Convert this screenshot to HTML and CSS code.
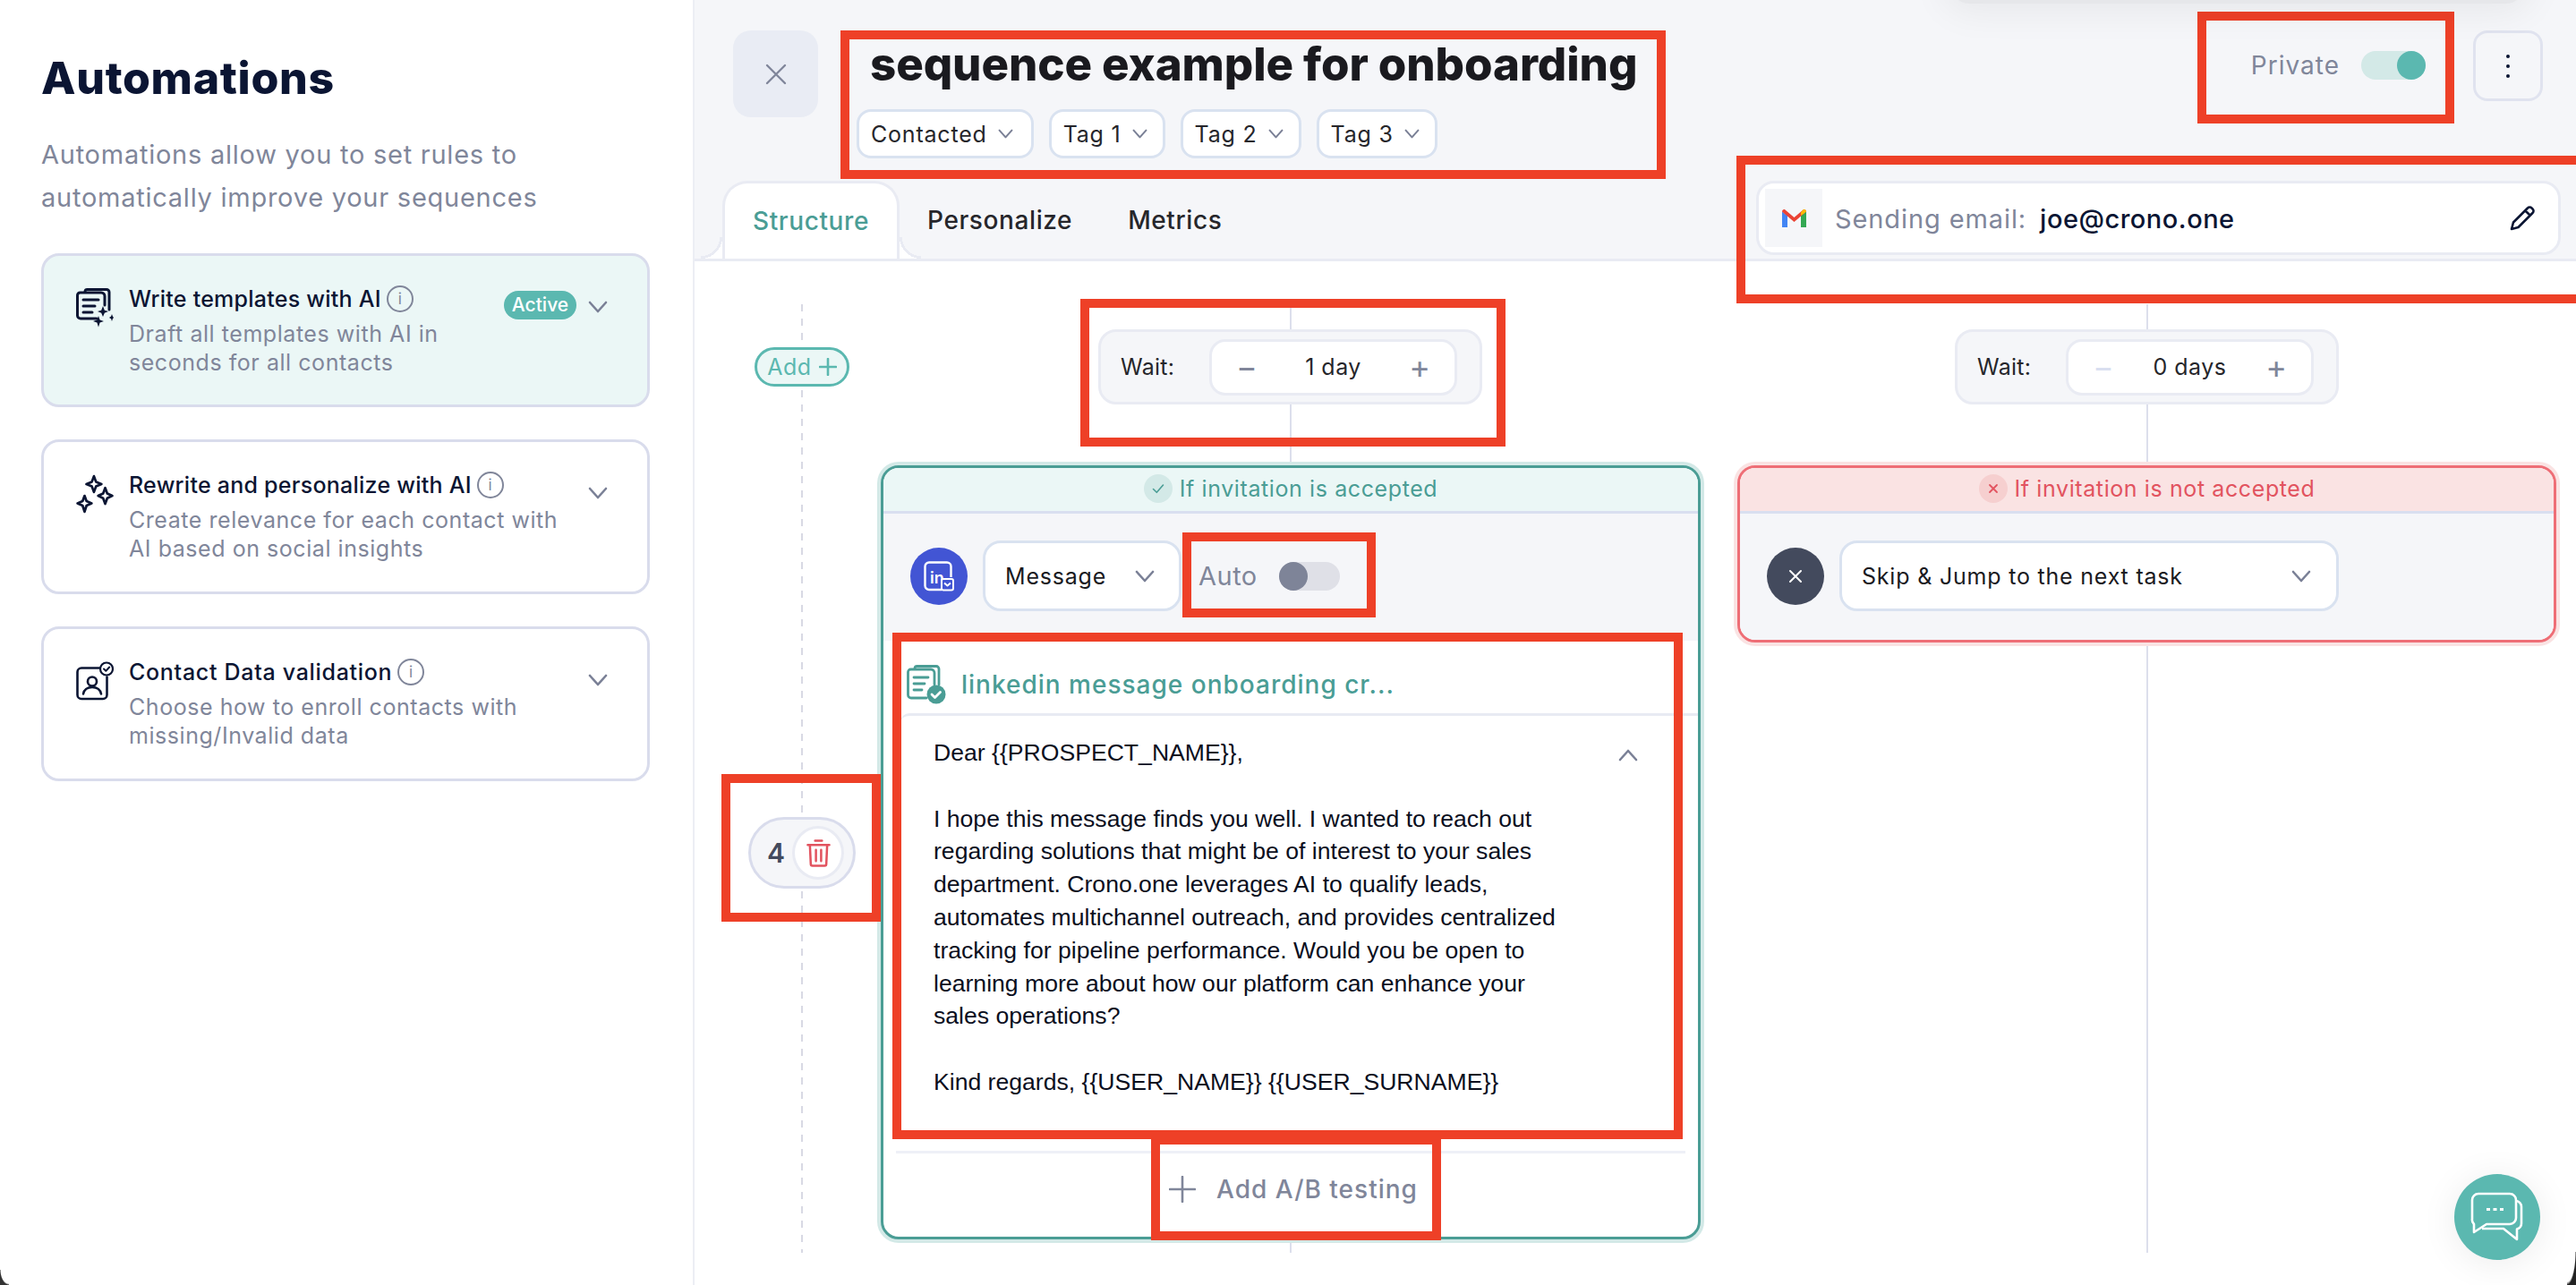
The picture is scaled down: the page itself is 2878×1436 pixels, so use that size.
FILE: index.html
```html
<!DOCTYPE html>
<html lang="en">
<head>
    <meta charset="UTF-8">
    <meta name="viewport" content="width=device-width, initial-scale=1.0">
    <title>Sequence editor</title>
    <link rel="stylesheet" href="styles.css">
</head>
<body>
<div class="app">
    <aside class="sidebar">
        <h1 class="side-title">Automations</h1>
        <p class="side-intro">Automations allow you to set rules to<br>automatically improve your sequences</p>

        <div class="auto-card active">
            <svg class="auto-icon" viewBox="0 0 42 44" fill="none" stroke="#0b1533" stroke-width="3" stroke-linecap="round" stroke-linejoin="round">
                <path d="M10 4V3.500A2.500 2.500 0 0 1 12.500 1.500H34a3 3 0 0 1 3 3V24"/>
                <path d="M23 34H5a3.500 3.500 0 0 1-3.500-3.500V8A3 3 0 0 1 4.500 5H28a4 4 0 0 1 4 4V19"/>
                <path d="M8 13H25M8 20H21M8 27H18"/>
                <path fill="#0b1533" stroke="none" d="M30 20l1.800 4.700L36 26l-4.200 1.800L30 32l-1.800-4.200L24 26l4.200-1.300zM40 29l.9 2.600L42 33l-1.100 1.300L40 37l-.9-2.700L37 33l2.100-1.400zM25 31l1.600 4.400L31 37l-4.400 1.600L25 43.500l-1.600-4.900L19 37l4.400-1.600z"/>
            </svg>
            <div class="auto-text">
                <div class="auto-name">Write templates with AI <span class="info">i</span></div>
                <div class="auto-desc">Draft all templates with AI in<br>seconds for all contacts</div>
            </div>
            <span class="badge">Active</span>
            <svg class="chev side-chev" viewBox="0 0 22 14"><path d="M2 2l9 10 9-10"/></svg>
        </div>

        <div class="auto-card">
            <svg class="auto-icon" viewBox="0 0 40 42" fill="none" stroke="#0b1533" stroke-width="2.600" stroke-linejoin="round">
                <path d="M19 2l2.200 6 5.800 2.500-5.800 2.500L19 19l-2.200-6-5.800-2.500 5.800-2.500zM31 14.500l2.200 6 5.300 2.500-5.300 2.500-2.200 6-2.200-6-5.300-2.500 5.300-2.500zM9 23l2.100 5.600 5.400 2.400-5.400 2.400L9 40l-2.100-6.600L1.500 31l5.400-2.400z"/>
            </svg>
            <div class="auto-text">
                <div class="auto-name">Rewrite and personalize with AI <span class="info">i</span></div>
                <div class="auto-desc">Create relevance for each contact with<br>AI based on social insights</div>
            </div>
            <svg class="chev side-chev" viewBox="0 0 22 14"><path d="M2 2l9 10 9-10"/></svg>
        </div>

        <div class="auto-card">
            <svg class="auto-icon" viewBox="0 0 42 43" fill="none" stroke="#0b1533" stroke-width="2.600" stroke-linecap="round" stroke-linejoin="round">
                <path d="M28 7H6a4.500 4.500 0 0 0-4.500 4.500V37A4.500 4.500 0 0 0 6 41.500H30a4.500 4.500 0 0 0 4.500-4.500V17"/>
                <circle cx="18" cy="22" r="5"/>
                <path d="M8 36c1-5 5-7.500 10-7.500s9 2.500 10 7.500"/>
                <circle cx="34" cy="8" r="7" fill="#fff" stroke-width="2.200"/>
                <path stroke-width="2" d="M31 8l2.300 2.300L37.200 6"/>
            </svg>
            <div class="auto-text">
                <div class="auto-name loose">Contact Data validation <span class="info">i</span></div>
                <div class="auto-desc">Choose how to enroll contacts with<br>missing/Invalid data</div>
            </div>
            <svg class="chev side-chev" viewBox="0 0 22 14"><path d="M2 2l9 10 9-10"/></svg>
        </div>
    </aside>

    <main class="main">
        <header class="head">
            <div class="topbar">
                <button class="close-btn">
                    <svg viewBox="0 0 24 24" fill="none" stroke="#80869a" stroke-width="2.400" stroke-linecap="round"><path d="M2 2l20 20M22 2L2 22"/></svg>
                </button>
                <div class="title-block">
                    <div class="seq-title">sequence example for onboarding</div>
                    <div class="tags">
                        <span class="tag">Contacted <svg class="chev" viewBox="0 0 22 14"><path d="M2 2l9 10 9-10"/></svg></span>
                        <span class="tag">Tag 1 <svg class="chev" viewBox="0 0 22 14"><path d="M2 2l9 10 9-10"/></svg></span>
                        <span class="tag">Tag 2 <svg class="chev" viewBox="0 0 22 14"><path d="M2 2l9 10 9-10"/></svg></span>
                        <span class="tag">Tag 3 <svg class="chev" viewBox="0 0 22 14"><path d="M2 2l9 10 9-10"/></svg></span>
                    </div>
                </div>
                <div class="private">
                    <span>Private</span>
                    <span class="switch on"><i></i></span>
                </div>
                <button class="menu-btn"><i></i><i></i><i></i></button>
            </div>
            <div class="tabrow">
                <div class="tab current">Structure</div>
                <div class="tab">Personalize</div>
                <div class="tab">Metrics</div>
                <div class="email-card">
                    <span class="gmail">
                        <svg viewBox="0 0 27 20"><path fill="#4285f4" d="M0 20V2.500L6 7v13z"/><path fill="#34a853" d="M21 20V7l6-4.500V20z"/><path fill="#ea4335" d="M0 2.500C0 .5 2 -.5 3.500 .5L13.500 9l10-8.500C25 -.5 27 .5 27 2.500L13.500 14z"/><path fill="#fbbc04" d="M21 7V3.300L23.500 .5C25 -.5 27 .5 27 2.500z"/></svg>
                    </span>
                    <span class="email-label">Sending email:</span>
                    <span class="email-value">joe@crono.one</span>
                    <svg class="pencil" viewBox="0 0 28 28" fill="none" stroke="#0b1533" stroke-width="2.600" stroke-linejoin="round"><path d="M20 2.500a3 3 0 0 1 4.500 0l1 1a3 3 0 0 1 0 4.500L9.500 24 2 26l2-7.500zM17.500 5.500l5 5"/></svg>
                </div>
            </div>
        </header>

        <section class="canvas">
            <div class="rail">
                <div class="add-pill">Add <svg viewBox="0 0 20 20" fill="none" stroke="#5bb8b0" stroke-width="2.600" stroke-linecap="round"><path d="M10 1v18M1 10h18"/></svg></div>
                <div class="step-pill">
                    <span class="step-num">4</span>
                    <span class="trash-btn">
                        <svg viewBox="0 0 28 32" fill="none" stroke="#e2535f" stroke-width="2.600" stroke-linecap="round" stroke-linejoin="round"><path d="M1.500 6.500h25M10 1.500h8M4 6.500l1 22a2 2 0 0 0 2 2h14a2 2 0 0 0 2-2l1-22M11 12v13M17 12v13"/></svg>
                    </span>
                </div>
            </div>

            <div class="col">
                <div class="wait">
                    <span class="wait-label">Wait:</span>
                    <div class="stepper">
                        <span class="step-sign">&minus;</span>
                        <span class="step-val">1 day</span>
                        <span class="step-sign">+</span>
                    </div>
                </div>
                <div class="branch yes">
                    <div class="branch-head">
                        <span class="cond-icon"><svg viewBox="0 0 16 16" fill="none" stroke="#4a9d95" stroke-width="1.600" stroke-linecap="round" stroke-linejoin="round"><path d="M2.500 8.500l3.800 3.800L13.500 4"/></svg></span>
                        If invitation is accepted
                    </div>
                    <div class="branch-row">
                        <span class="round-icon linkedin">
                            <svg viewBox="0 0 34 34" fill="none" stroke="#fff" stroke-width="2.400" stroke-linejoin="round">
                                <path d="M20 32H6a4.500 4.500 0 0 1-4.500-4.500V6A4.500 4.500 0 0 1 6 1.500H26A4.500 4.500 0 0 1 30.500 6V18"/>
                                <text x="7" y="25" fill="#fff" stroke="none" font-family="Inter, sans-serif" font-size="18" font-weight="600">in</text>
                                <rect x="20" y="20" width="13" height="12.500" rx="2" fill="#4255d4" stroke-width="2"/>
                                <path stroke-width="2" d="M23 24.500l3.500 3 3.500-3"/>
                            </svg>
                        </span>
                        <div class="select msg-select">Message <svg class="chev" viewBox="0 0 22 14"><path d="M2 2l9 10 9-10"/></svg></div>
                        <span class="auto-label">Auto</span>
                        <span class="switch off"><i></i></span>
                    </div>
                    <div class="template">
                        <div class="tpl-head">
                            <svg class="tpl-icon" viewBox="0 0 44 44" fill="none" stroke="#4a9d95" stroke-width="2.800" stroke-linecap="round" stroke-linejoin="round">
                                <path d="M9 4V3.500A2.500 2.500 0 0 1 11.500 1.500H33a3 3 0 0 1 3 3V22"/>
                                <path d="M22 37H5a3.500 3.500 0 0 1-3.500-3.500V8A3 3 0 0 1 4.500 5H27a4 4 0 0 1 4 4V22"/>
                                <path d="M8 14H24M8 21H20M8 28H17"/>
                                <circle cx="33" cy="33" r="10.500" fill="#4a9d95" stroke="none"/>
                                <path stroke="#fff" d="M28 33l3.500 3.500 6-6"/>
                            </svg>
                            <span class="tpl-name">linkedin message onboarding cr...</span>
                        </div>
                        <div class="message">
                            <div class="msg-text">
                                Dear {{PROSPECT_NAME}},<br><br>
                                I hope this message finds you well. I wanted to reach out<br>
                                regarding solutions that might be of interest to your sales<br>
                                department. Crono.one leverages AI to qualify leads,<br>
                                automates multichannel outreach, and provides centralized<br>
                                tracking for pipeline performance. Would you be open to<br>
                                learning more about how our platform can enhance your<br>
                                sales operations?<br><br>
                                Kind regards, {{USER_NAME}} {{USER_SURNAME}}
                            </div>
                            <svg class="chev msg-chev" viewBox="0 0 22 14"><path d="M2 12l9-10 9 10"/></svg>
                        </div>
                        <div class="ab-row">
                            <svg viewBox="0 0 30 30" fill="none" stroke="#80869a" stroke-width="2.600" stroke-linecap="round"><path d="M15 1v28M1 15h28"/></svg>
                            Add A/B testing
                        </div>
                    </div>
                </div>
            </div>

            <div class="col">
                <div class="wait">
                    <span class="wait-label">Wait:</span>
                    <div class="stepper">
                        <span class="step-sign dim">&minus;</span>
                        <span class="step-val">0 days</span>
                        <span class="step-sign">+</span>
                    </div>
                </div>
                <div class="branch no">
                    <div class="branch-head">
                        <span class="cond-icon"><svg viewBox="0 0 16 16" fill="none" stroke="#e2535f" stroke-width="1.800" stroke-linecap="round"><path d="M4 4l8 8M12 4l-8 8"/></svg></span>
                        If invitation is not accepted
                    </div>
                    <div class="branch-row">
                        <span class="round-icon skip">
                            <svg viewBox="0 0 16 16" fill="none" stroke="#fff" stroke-width="2" stroke-linecap="round"><path d="M2 2l12 12M14 2L2 14"/></svg>
                        </span>
                        <div class="select skip-select">Skip &amp; Jump to the next task <svg class="chev" viewBox="0 0 22 14"><path d="M2 2l9 10 9-10"/></svg></div>
                    </div>
                </div>
            </div>
        </section>
    </main>

    <button class="chat-btn">
        <svg viewBox="0 0 96 96" fill="none" stroke="#fff" stroke-width="2.600" stroke-linejoin="round">
            <path d="M27 22H62a7 7 0 0 1 7 7V49a7 7 0 0 1-7 7H36L22 65V56a7 7 0 0 1-2-6V29a7 7 0 0 1 7-7z"/>
            <path d="M69 30a6.500 6.500 0 0 1 6 6.500V55a6.500 6.500 0 0 1-5 6.500V73L55 61H31"/>
            <path stroke="none" fill="#fff" d="M36 38h4v3h-4zM43.500 38h4v3h-4zM51 38h4v3h-4z"/>
        </svg>
    </button>

    <!-- red review marks drawn over the screen -->
    <div class="mark mark-title"></div>
    <div class="mark mark-private"></div>
    <div class="mark mark-email"></div>
    <div class="mark mark-wait"></div>
    <div class="mark mark-auto"></div>
    <div class="mark mark-message"></div>
    <div class="mark mark-step"></div>
    <div class="mark mark-ab"></div>
    <div class="top-shade"></div>
    <div class="corner corner-l"></div>
    <div class="corner corner-r"></div>
</div>
</body>
</html>
```

FILE: styles.css
```css
* { box-sizing: border-box; }
html, body { margin: 0; height: 100%; }
body { font-family: Inter, "Noto Sans", sans-serif; color: #0b1533; background: #fff; overflow: hidden; }
button { padding: 0; font: inherit; cursor: pointer; }
.app { position: relative; display: flex; width: 2878px; height: 1436px; overflow: hidden; }

.chev { fill: none; stroke: #7a8096; stroke-width: 2.6; stroke-linecap: round; stroke-linejoin: round; width: 22px; height: 14px; flex: none; }

/* left panel */
.sidebar { width: 776px; flex: none; padding: 57px 50px 0 46px; border-right: 2px solid #eceef4; }
.side-title { margin: 0 0 32px; font-size: 50px; line-height: 60px; font-weight: 800; letter-spacing: .7px; }
.side-intro { margin: 0 0 38px; font-size: 29px; line-height: 48px; color: #80869a; letter-spacing: .75px; }
.auto-card { position: relative; display: flex; width: 680px; height: 173px; margin-bottom: 36px; padding: 33px 0 0 36px; border: 3px solid #d9dcec; border-radius: 20px; }
.auto-card.active { height: 172px; background: #ebf7f6; }
.auto-icon { width: 42px; height: 44px; flex: none; margin-top: 3px; }
.auto-text { margin-left: 17px; }
.auto-name { display: flex; align-items: center; gap: 6px; font-size: 25px; line-height: 30px; font-weight: 500; letter-spacing: .25px; white-space: nowrap; }
.auto-name.loose { letter-spacing: .7px; }
.info { display: inline-flex; align-items: center; justify-content: center; width: 30px; height: 30px; border: 2px solid #80869a; border-radius: 50%; font-size: 17px; font-weight: 400; color: #80869a; }
.auto-desc { margin-top: 8px; font-size: 25px; line-height: 32px; color: #80869a; letter-spacing: .55px; white-space: nowrap; }
.side-chev { position: absolute; right: 44px; top: 50px; }
.badge { position: absolute; left: 514px; top: 39px; width: 81px; height: 32px; border-radius: 16px; background: #5bb8b0; color: #fff; font-size: 21px; line-height: 32px; text-align: center; font-weight: 500; }

/* header */
.main { flex: 1; min-width: 0; display: flex; flex-direction: column; }
.head { height: 292px; flex: none; display: flex; flex-direction: column; background: #f5f6f9; border-bottom: 3px solid #e9ebf3; }
.topbar { display: flex; align-items: flex-start; height: 204px; padding: 34px 37px 0 43px; }
.close-btn { width: 95px; height: 97px; flex: none; display: flex; align-items: center; justify-content: center; border: 0; border-radius: 20px; background: #e9ecf4; }
.close-btn svg { width: 24px; height: 24px; }
.title-block { margin-left: 43px; flex: 1; }
.seq-title { margin-left: 15px; font-size: 51px; line-height: 78px; margin-top: -1px; font-weight: 800; color: #1a1a1f; letter-spacing: -.1px; white-space: nowrap; }
.tags { display: flex; gap: 17px; margin-top: 11px; }
.tag { display: flex; align-items: center; gap: 12px; height: 55px; padding: 0 17px 0 13px; background: #fff; border: 3px solid #d9e2f0; border-radius: 16px; font-size: 25px; color: #26262b; letter-spacing: .8px; white-space: nowrap; }
.tag:first-child { padding-right: 20px; }
.tag .chev { width: 17px; height: 11px; }
.private { display: flex; align-items: center; gap: 24px; height: 64px; margin-top: 7px; font-size: 28px; color: #80869a; letter-spacing: 1px; }
.switch { display: flex; width: 72px; height: 32px; border-radius: 16px; background: #d3e9e7; }
.switch i { width: 32px; height: 32px; border-radius: 50%; background: #5bb8b0; }
.switch.on { justify-content: flex-end; }
.switch.off { width: 68px; background: #dfe0e7; }
.switch.off i { background: #7e8498; }
.menu-btn { width: 78px; height: 79px; margin: 0 0 0 53px; flex: none; display: flex; flex-direction: column; align-items: center; justify-content: center; gap: 7px; background: #f5f6f9; border: 3px solid #e0e3ef; border-radius: 16px; }
.menu-btn i { width: 4px; height: 4px; border-radius: 50%; background: #0b1533; }

.tabrow { flex: 1; display: flex; padding: 0 17px 0 31px; }
.tab { height: 87px; padding: 0 31px; display: flex; align-items: center; font-size: 28px; font-weight: 500; color: #26262b; letter-spacing: .6px; white-space: nowrap; }
.tab.current { position: relative; width: 198px; padding: 0; justify-content: center; background: #fff; border: 3px solid #e9ebf3; border-bottom: 0; border-radius: 28px 28px 0 0; color: #4a9d95; }
.tab.current::before, .tab.current::after { content: ""; position: absolute; bottom: 0; width: 24px; height: 24px; }
.tab.current::before { left: -27px; background: radial-gradient(circle at 0 0, #f5f6f9 21px, #e9ebf3 21px 24px, #fff 24px); }
.tab.current::after { right: -27px; background: radial-gradient(circle at 100% 0, #f5f6f9 21px, #e9ebf3 21px 24px, #fff 24px); }
.email-card { display: flex; align-items: center; width: 899px; height: 83px; margin-left: auto; padding: 0 26px 0 7px; background: #fff; border: 3px solid #e9ebf3; border-radius: 20px; font-size: 29px; white-space: nowrap; }
.gmail { display: flex; align-items: center; justify-content: center; width: 64px; height: 65px; flex: none; background: #f5f6f9; }
.gmail svg { width: 27px; height: 20px; }
.email-label { margin: 2px 0 0 14px; color: #80869a; letter-spacing: .9px; }
.email-value { margin: 2px 0 0 15px; font-weight: 500; letter-spacing: .5px; }
.pencil { width: 28px; height: 28px; margin-left: auto; }

/* sequence */
.canvas { flex: 1; display: flex; min-height: 0; }
.rail { position: relative; width: 204px; flex: none; padding-top: 96px; }
.rail::before { content: ""; position: absolute; left: 119px; top: 48px; bottom: 36px; width: 2px; background: repeating-linear-gradient(to bottom, #d8d9e4 0 8px, transparent 8px 16px); }
.add-pill { position: relative; display: flex; align-items: center; justify-content: center; gap: 8px; width: 106px; height: 44px; margin-left: 67px; background: #ebf7f6; border: 3px solid #5bb8b0; border-radius: 22px; color: #5bb8b0; font-size: 25px; letter-spacing: .5px; }
.add-pill svg { width: 20px; height: 20px; }
.step-pill { position: relative; display: flex; align-items: center; width: 120px; height: 80px; margin: 481px 0 0 60px; padding: 0 10px 0 18px; background: #f5f6f9; border: 3px solid #d9dcec; border-radius: 40px; }
.step-num { font-size: 30px; font-weight: 600; color: #434a5d; }
.trash-btn { display: flex; align-items: center; justify-content: center; width: 58px; height: 60px; margin-left: auto; background: #fff; border: 3px solid #e9ebf3; border-radius: 50%; }
.trash-btn svg { width: 27px; height: 31px; }

.col { position: relative; width: 923px; flex: none; margin-right: 34px; padding-top: 76px; }
.col::before { content: ""; position: absolute; left: 50%; top: 48px; bottom: 36px; width: 2px; margin-left: -1px; background: #dcdfec; }
.wait { position: relative; display: flex; align-items: center; justify-content: space-between; width: 429px; height: 84px; margin: 0 auto; padding: 0 25px 0 22px; background: #f5f6f9; border: 3px solid #e9ebf3; border-radius: 20px; }
.wait-label { font-size: 25px; color: #26262b; letter-spacing: .3px; }
.stepper { display: flex; align-items: center; justify-content: space-between; width: 277px; height: 63px; padding: 0 27px; background: #fff; border: 3px solid #e9ebf3; border-radius: 18px; }
.step-val { font-size: 25px; color: #26262b; letter-spacing: .5px; }
.step-sign { font-size: 36px; line-height: 36px; color: #80869a; }
.step-sign.dim { color: #d9dff0; }

.branch { position: relative; display: flex; flex-direction: column; margin: 68px 4px 0 4px; border: 3px solid; border-radius: 20px; overflow: hidden; background: #fff; }
.branch.yes { height: 865px; margin-right: 3px; border-color: #4a9d95; box-shadow: 0 0 0 4px #d3e9e7; }
.branch.no { height: 198px; border-color: #ee6e76; box-shadow: 0 0 0 4px #fae3e3; }
.branch-head { display: flex; align-items: center; justify-content: center; gap: 8px; height: 51px; flex: none; padding-bottom: 2px; border-bottom: 3px solid #d9dff0; font-size: 25px; letter-spacing: .6px; }
.yes .branch-head { background: #ebf7f6; color: #4a9d95; }
.no .branch-head { background: #fae3e3; color: #e2535f; }
.cond-icon { display: flex; align-items: center; justify-content: center; width: 32px; height: 32px; border-radius: 50%; }
.cond-icon svg { width: 16px; height: 16px; }
.yes .cond-icon { background: #d3e9e7; }
.no .cond-icon { background: #f6cfcf; }
.branch-row { display: flex; align-items: center; height: 142px; flex: none; padding: 0 0 3px 30px; background: #f5f6f9; }
.round-icon { display: flex; align-items: center; justify-content: center; width: 64px; height: 64px; flex: none; border-radius: 50%; }
.linkedin { background: #4255d4; }
.linkedin svg { width: 34px; height: 34px; }
.skip { background: #434a5d; }
.skip svg { width: 16px; height: 16px; }
.select { display: flex; align-items: center; justify-content: space-between; height: 79px; margin-left: 17px; background: #fff; border: 3px solid #d9e2f0; border-radius: 20px; font-size: 25px; font-weight: 400; color: #1a1a1f; letter-spacing: .8px; white-space: nowrap; }
.msg-select { width: 222px; padding: 0 27px 0 22px; }
.skip-select { width: 558px; padding: 0 28px 0 22px; }
.auto-label { margin-left: 19px; width: 90px; font-size: 29px; color: #80869a; letter-spacing: .5px; }

.template { flex: 1; display: flex; flex-direction: column; min-height: 0; }
.tpl-head { display: flex; align-items: center; gap: 17px; height: 81px; flex: none; padding: 16px 0 0 26px; }
.tpl-icon { width: 44px; height: 44px; }
.tpl-name { font-size: 28px; font-weight: 500; color: #4a9d95; letter-spacing: 1px; white-space: nowrap; }
.message { flex: 1; display: flex; margin-left: 19px; padding: 23px 67px 0 37px; border-top: 3px solid #e8ebf3; border-top-left-radius: 10px; font-family: "Liberation Sans", Arial, sans-serif; font-size: 26.6px; line-height: 36.8px; color: #0b0f1e; white-space: nowrap; }
.msg-chev { margin: 14px 0 0 auto; }
.ab-row { display: flex; align-items: center; justify-content: center; gap: 23px; height: 96px; flex: none; margin: 0 14px; padding: 0 0 13px 6px; border-top: 3px solid #eef0f7; font-size: 28px; font-weight: 500; color: #80869a; letter-spacing: 1px; }
.ab-row svg { width: 30px; height: 30px; }

/* overlays */
.chat-btn { position: absolute; left: 2742px; top: 1312px; width: 96px; height: 96px; border: 0; border-radius: 50%; background: #5bb8b0; box-shadow: 0 4px 40px rgba(0, 0, 0, .08); }
.chat-btn svg { display: block; width: 96px; height: 96px; }
.mark { position: absolute; border: 10px solid #ee4027; pointer-events: none; }
.mark-title { left: 939px; top: 34px; width: 922px; height: 166px; }
.mark-private { left: 2455px; top: 13px; width: 287px; height: 125px; }
.mark-email { left: 1940px; top: 174px; width: 960px; height: 165px; }
.mark-wait { left: 1207px; top: 334px; width: 475px; height: 165px; }
.mark-auto { left: 1321px; top: 595px; width: 216px; height: 95px; }
.mark-message { left: 997px; top: 707px; width: 883px; height: 566px; }
.mark-step { left: 806px; top: 865px; width: 178px; height: 165px; }
.mark-ab { left: 1286px; top: 1269px; width: 324px; height: 117px; }
.top-shade { position: absolute; left: 2180px; top: -40px; width: 640px; height: 44px; border-radius: 20px; background: #e6e7ea; box-shadow: 0 0 40px 10px rgba(0, 0, 0, .06); }
.corner { position: absolute; bottom: 0; }
.corner-l { left: 0; width: 10px; height: 17px; background: radial-gradient(ellipse 100% 100% at 100% 0, transparent 90%, #aaa 94%, #333 100%); }
.corner-r { right: 0; width: 10px; height: 37px; background: radial-gradient(ellipse 100% 100% at 0 0, transparent 90%, #aaa 94%, #222 100%); }
```
